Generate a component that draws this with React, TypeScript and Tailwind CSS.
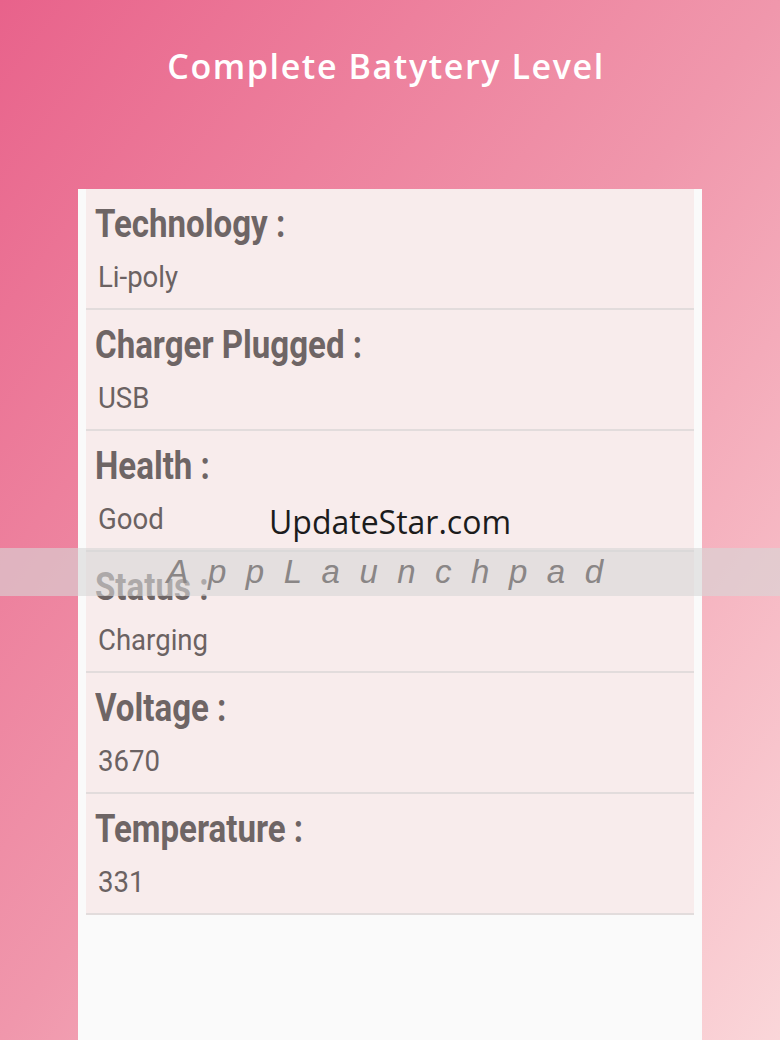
const rows = [
  { label: 'Technology :', value: 'Li-poly' },
  { label: 'Charger Plugged :', value: 'USB' },
  { label: 'Health :', value: 'Good' },
  { label: 'Status :', value: 'Charging' },
  { label: 'Voltage :', value: '3670' },
  { label: 'Temperature :', value: '331' },
];

function InfoRow({ label, value }: { label: string; value: string }) {
  return (
    <div className="flex flex-col bg-[#f8ecec] border-b-2 border-[#e2dcdc] pt-[13px] pb-[10px] pl-[9px] h-[121px]">
      <div className="h-[44px] leading-[44px] text-[38px] font-bold text-[#6e6565] whitespace-nowrap">
        <span className="inline-block origin-left scale-x-[0.87]">{label}</span>
      </div>
      <div className="mt-[13px] pl-[3px] h-[36px] leading-[36px] text-[29px] text-[#6b6262] whitespace-nowrap">
        <span className="inline-block origin-left scale-x-[0.95]">{value}</span>
      </div>
    </div>
  );
}

export default function App() {
  return (
    <div
      className="relative flex flex-col h-[1040px] w-full overflow-hidden bg-gradient-to-br from-[#e8628b] via-[#f097ac] to-[#fad6d9]"
      style={{ fontFamily: 'Roboto, "Liberation Sans", sans-serif' }}
    >
      <h1 className="pt-[46px] pr-[8px] h-[189px] text-center text-[34px] leading-[40px] font-semibold tracking-[1.6px] text-white [font-family:'Open_Sans',sans-serif]">
        Complete Batytery Level
      </h1>

      <div className="mx-[78px] flex-1 bg-[#fafafa] px-[8px]">
        {rows.map((r) => (
          <InfoRow key={r.label} label={r.label} value={r.value} />
        ))}
      </div>

      {/* watermark overlay */}
      <div className="absolute left-0 right-0 top-[502px] text-center text-[32px] leading-[40px] text-[#1c1c1c] [font-family:'Open_Sans',sans-serif]">
        UpdateStar.com
      </div>
      <div className="absolute left-0 right-0 top-[548px] h-[48px] bg-[rgba(215,215,215,0.6)] flex items-center justify-center">
        <span className="pl-[9px] text-[33px] italic tracking-[19.5px] text-[#8a8686] [font-family:'Liberation_Sans',sans-serif]">
          AppLaunchpad
        </span>
      </div>
    </div>
  );
}
